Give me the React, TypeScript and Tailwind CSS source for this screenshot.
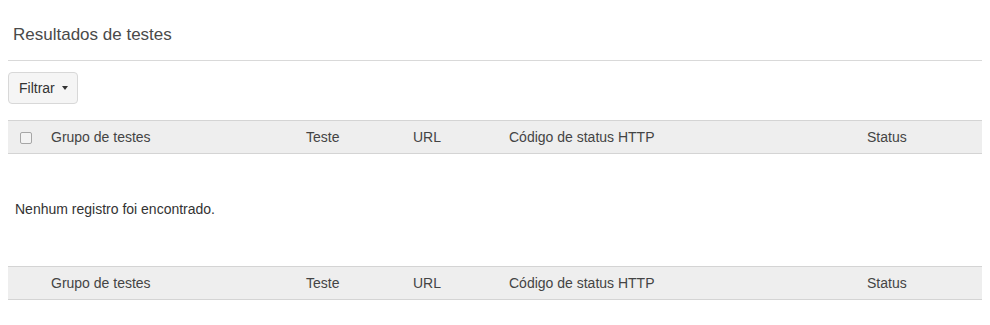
import React from "react";

const cols = "grid grid-cols-[43px_255px_107px_96px_358px_1fr] items-center";

function HeaderRow({ checkbox }: { checkbox?: boolean }) {
  return (
    <div className={`${cols} h-[34px] bg-[#eeeeee] border-t border-b border-[#d4d4d4] text-[14px] text-[#444]`}>
      <div className="pl-3 flex items-center">
        {checkbox && (
          <span className="block w-[12px] h-[12px] mt-[2px] rounded-[2px] border border-[#a6a6a6] bg-[#f3f3f3]" />
        )}
      </div>
      <div>Grupo de testes</div>
      <div>Teste</div>
      <div>URL</div>
      <div>Código de status HTTP</div>
      <div>Status</div>
    </div>
  );
}

export default function App() {
  return (
    <div className="w-[990px] h-[325px] bg-white px-2" style={{ fontFamily: '"Liberation Sans", Arial, sans-serif' }}>
      <div className="h-[61px] border-b border-[#d9d9d9] flex items-end pb-[15px] pl-[5px]">
        <h1 className="text-[17px] leading-[20px] text-[#4a4a4a]">Resultados de testes</h1>
      </div>
      <div className="pt-[11px]">
        <button className="w-[70px] h-[32px] pl-[10px] flex items-center gap-[7px] rounded-[4px] border border-[#d8d8d8] bg-[#f5f5f5] text-[14px] text-[#333]">
          <span>Filtrar</span>
          <span className="w-0 h-0 border-l-[3px] border-r-[3px] border-t-[4px] border-l-transparent border-r-transparent border-t-[#333]" />
        </button>
      </div>
      <div className="mt-[16px]">
        <HeaderRow checkbox />
        <div className="h-[112px] flex items-center pb-[2px] pl-[7px] text-[14px] text-[#333]">Nenhum registro foi encontrado.</div>
        <HeaderRow />
      </div>
    </div>
  );
}
